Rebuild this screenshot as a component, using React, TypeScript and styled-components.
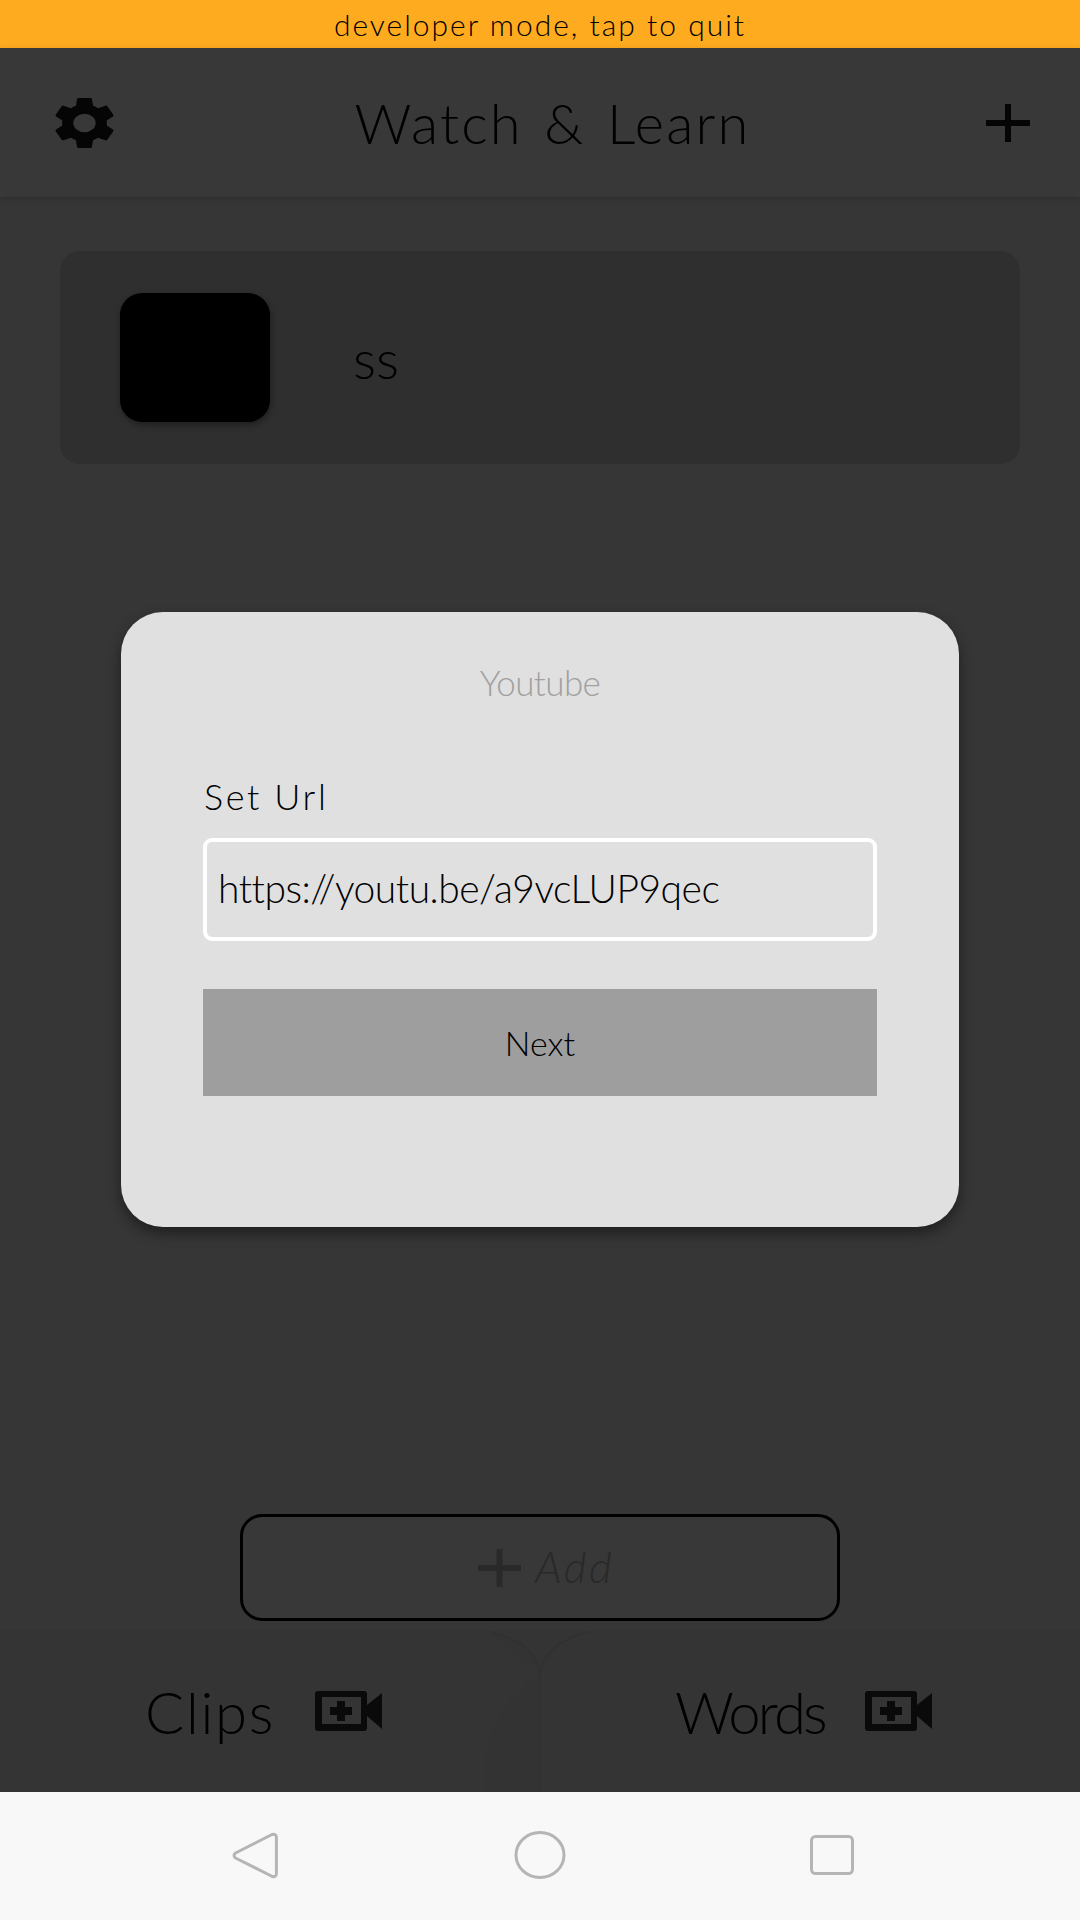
import React from "react";
import styled, {createGlobalStyle} from "styled-components";

const GlobalStyle = createGlobalStyle`
    html, body {
        margin: 0;
        padding: 0;
        background: #363636;
    }

    * {
        box-sizing: border-box;
    }
`;

const handFont = `Lato, "Liberation Sans", sans-serif`;

const Screen = styled.div`
    position: relative;
    width: 1080px;
    height: 1920px;
    display: flex;
    flex-direction: column;
    overflow: hidden;
    background: #363636;
    font-family: ${handFont};
    font-weight: 300;
    color: #000;
`;

const DevBanner = styled.div`
    height: 48px;
    flex: none;
    display: flex;
    align-items: center;
    justify-content: center;
    background: #ffab20;
    font-size: 30px;
    letter-spacing: 2px;
    color: #000;
`;

const Header = styled.header`
    height: 149px;
    flex: none;
    padding: 0 50px 0 55px;
    display: flex;
    align-items: center;
    justify-content: space-between;
    background: #383838;
    box-shadow: 0 2px 6px rgba(0, 0, 0, 0.18);
`;

const Title = styled.h1`
    margin: 0 0 0 5px;
    font-size: 56px;
    font-weight: 300;
    letter-spacing: 2.2px;
    word-spacing: 4px;
    line-height: 1;
    color: #000;
`;

const List = styled.main`
    flex: 1;
    padding: 54px 60px 0;
`;

const ClipCard = styled.div`
    height: 213px;
    padding: 42px 60px;
    display: flex;
    align-items: stretch;
    gap: 83px;
    background: #2f2f2f;
    border-radius: 20px;
`;

const Thumb = styled.div`
    width: 150px;
    background: #000;
    border-radius: 22px;
    box-shadow: 1px 3px 6px rgba(0, 0, 0, 0.35);
`;

const ClipName = styled.div`
    align-self: center;
    margin-top: 2px;
    font-size: 54px;
    color: #000;
`;

const AddRow = styled.div`
    flex: none;
    display: flex;
    justify-content: center;
    margin-bottom: 9px;
`;

const AddButton = styled.button`
    width: 600px;
    height: 107px;
    display: flex;
    align-items: center;
    justify-content: center;
    gap: 14px;
    background: #383838;
    border: 3px solid #000;
    border-radius: 22px;
    font-family: ${handFont};
    font-size: 44px;
    font-style: italic;
    font-weight: 300;
    letter-spacing: 2.5px;
    color: #292929;
    padding: 0 0 0 12px;
`;

const AddLabel = styled.span`
    margin-bottom: 4px;
`;

const TabBar = styled.nav`
    position: relative;
    height: 162px;
    flex: none;
    display: grid;
    grid-template-columns: 1fr 1fr;
    background: #343434;
`;

const Tab = styled.div<{$inset: number}>`
    display: flex;
    align-items: center;
    gap: 40px;
    padding-left: ${p => p.$inset}px;
`;

const TabLabel = styled.span<{$tracking: number}>`
    font-size: 58px;
    letter-spacing: ${p => p.$tracking}px;
    color: #000;
`;

const TabDivider = styled.svg`
    position: absolute;
    left: 440px;
    top: 0;
    width: 200px;
    height: 162px;
    pointer-events: none;
`;

const SystemBar = styled.div`
    height: 128px;
    flex: none;
    display: flex;
    align-items: center;
    background: #f8f8f8;
    padding-bottom: 2px;
`;

const SystemSlot = styled.div<{$offset: number}>`
    display: flex;
    margin-left: ${p => p.$offset}px;
`;

const Modal = styled.section`
    position: absolute;
    left: 121px;
    top: 612px;
    width: 838px;
    height: 615px;
    padding: 48px 82px 0;
    display: flex;
    flex-direction: column;
    background: #e0e0e0;
    border-radius: 42px;
    box-shadow: 0 6px 14px rgba(0, 0, 0, 0.45);
`;

const ModalTitle = styled.div`
    text-align: center;
    font-size: 35px;
    letter-spacing: -0.6px;
    line-height: 44px;
    color: #a0a0a0;
`;

const FieldLabel = styled.label`
    margin: 70px 0 0 1px;
    font-size: 36px;
    letter-spacing: 2.6px;
    line-height: 44px;
    color: #000;
`;

const UrlInput = styled.div`
    margin-top: 20px;
    height: 103px;
    padding: 0 0 4px 11px;
    display: flex;
    align-items: center;
    border: 4px solid #fff;
    border-radius: 9px;
    font-size: 39px;
    letter-spacing: -0.5px;
    color: #000;
`;

const NextButton = styled.button`
    margin-top: 48px;
    height: 107px;
    border: 0;
    background: #9e9e9e;
    font-family: ${handFont};
    font-size: 34px;
    font-weight: 300;
    color: #000;
`;

const GearIcon = () => (
    <svg width="59" height="52" viewBox="2.5 2 19 20" preserveAspectRatio="none" fill="#050505">
      <path d="M19.14 12.94c.04-.3.06-.61.06-.94 0-.32-.02-.64-.07-.94l2.03-1.58a.49.49 0 0 0 .12-.61l-1.92-3.32a.49.49 0 0 0-.59-.22l-2.39.96a7 7 0 0 0-1.62-.94l-.36-2.54a.48.48 0 0 0-.48-.41h-3.84a.47.47 0 0 0-.47.41l-.36 2.54c-.59.24-1.13.57-1.62.94l-2.39-.96a.48.48 0 0 0-.59.22L2.74 8.87a.47.47 0 0 0 .12.61l2.03 1.58c-.05.3-.09.63-.09.94s.02.64.07.94l-2.03 1.58a.49.49 0 0 0-.12.61l1.92 3.32c.12.22.37.29.59.22l2.39-.96c.5.38 1.03.7 1.62.94l.36 2.54c.05.24.24.41.48.41h3.84c.24 0 .44-.17.47-.41l.36-2.54c.59-.24 1.13-.56 1.62-.94l2.39.96c.22.08.47 0 .59-.22l1.92-3.32a.47.47 0 0 0-.12-.61l-2.01-1.58zM12 15.6A3.6 3.6 0 1 1 12 8.4a3.6 3.6 0 0 1 0 7.2z"/>
    </svg>
);

const PlusIcon = ({color, width, height}: {color: string; width: number; height: number}) => (
    <svg width={width} height={height} viewBox="0 0 44 38" preserveAspectRatio="none" fill={color}>
      <rect x="0" y="16" width="44" height="6"/>
      <rect x="19" y="0" width="6" height="38"/>
    </svg>
);

const VideoAddIcon = () => (
    <svg width="68" height="40" viewBox="0 0 68 40" fill="#0a0a0a">
      <path fillRule="evenodd" d="M3 0h46a3 3 0 0 1 3 3v34a3 3 0 0 1-3 3H3a3 3 0 0 1-3-3V3a3 3 0 0 1 3-3zM7 6v27h39V6z"/>
      <path d="M22 10h8v6h7v8h-7v6h-8v-6h-7v-8h7z"/>
      <path d="M52 14L67 2v36L52 25z"/>
    </svg>
);

const BackIcon = () => (
    <svg width="46" height="47" viewBox="0 0 46 47" fill="none" stroke="#b5b5b5" strokeWidth="3">
      <path d="M39 3c2.5-1.6 5.4-.4 5.4 2v37c0 2.4-2.9 3.6-5 2L3.5 26c-2-1.6-2-3.4 0-5z" strokeLinejoin="round"/>
    </svg>
);

const HomeIcon = () => (
    <svg width="52" height="48" viewBox="0 0 52 48" fill="none" stroke="#b5b5b5" strokeWidth="3">
      <ellipse cx="26" cy="24" rx="24" ry="22.5"/>
    </svg>
);

const RecentsIcon = () => (
    <svg width="44" height="40" viewBox="0 0 44 40" fill="none" stroke="#b5b5b5" strokeWidth="3">
      <rect x="1.5" y="1.5" width="41" height="37" rx="4"/>
    </svg>
);

export default function App() {
  return (
      <Screen>
        <GlobalStyle/>
        <DevBanner>developer mode, tap to quit</DevBanner>
        <Header>
          <GearIcon/>
          <Title>Watch &amp; Learn</Title>
          <PlusIcon color="#050505" width={44} height={38}/>
        </Header>
        <List>
          <ClipCard>
            <Thumb/>
            <ClipName>ss</ClipName>
          </ClipCard>
        </List>
        <AddRow>
          <AddButton>
            <PlusIcon color="#292929" width={43} height={38}/>
            <AddLabel>Add</AddLabel>
          </AddButton>
        </AddRow>
        <TabBar>
          <TabDivider viewBox="0 0 200 162" fill="none">
            <path d="M50 2c30 6 48 22 50 42V162H45C40 110 60 70 100 44" fill="#313131" fillOpacity="0.3"/>
            <path d="M50 2c30 6 48 22 50 42V162M150 2c-30 6-48 22-50 42" stroke="#313131" strokeWidth="2"/>
          </TabDivider>
          <Tab $inset={145}>
            <TabLabel $tracking={1.7}>Clips</TabLabel>
            <VideoAddIcon/>
          </Tab>
          <Tab $inset={135}>
            <TabLabel $tracking={-2.8}>Words</TabLabel>
            <VideoAddIcon/>
          </Tab>
        </TabBar>
        <SystemBar>
          <SystemSlot $offset={232}><BackIcon/></SystemSlot>
          <SystemSlot $offset={236}><HomeIcon/></SystemSlot>
          <SystemSlot $offset={244}><RecentsIcon/></SystemSlot>
        </SystemBar>
        <Modal>
          <ModalTitle>Youtube</ModalTitle>
          <FieldLabel>Set Url</FieldLabel>
          <UrlInput>https://youtu.be/a9vcLUP9qec</UrlInput>
          <NextButton>Next</NextButton>
        </Modal>
      </Screen>
  );
}
